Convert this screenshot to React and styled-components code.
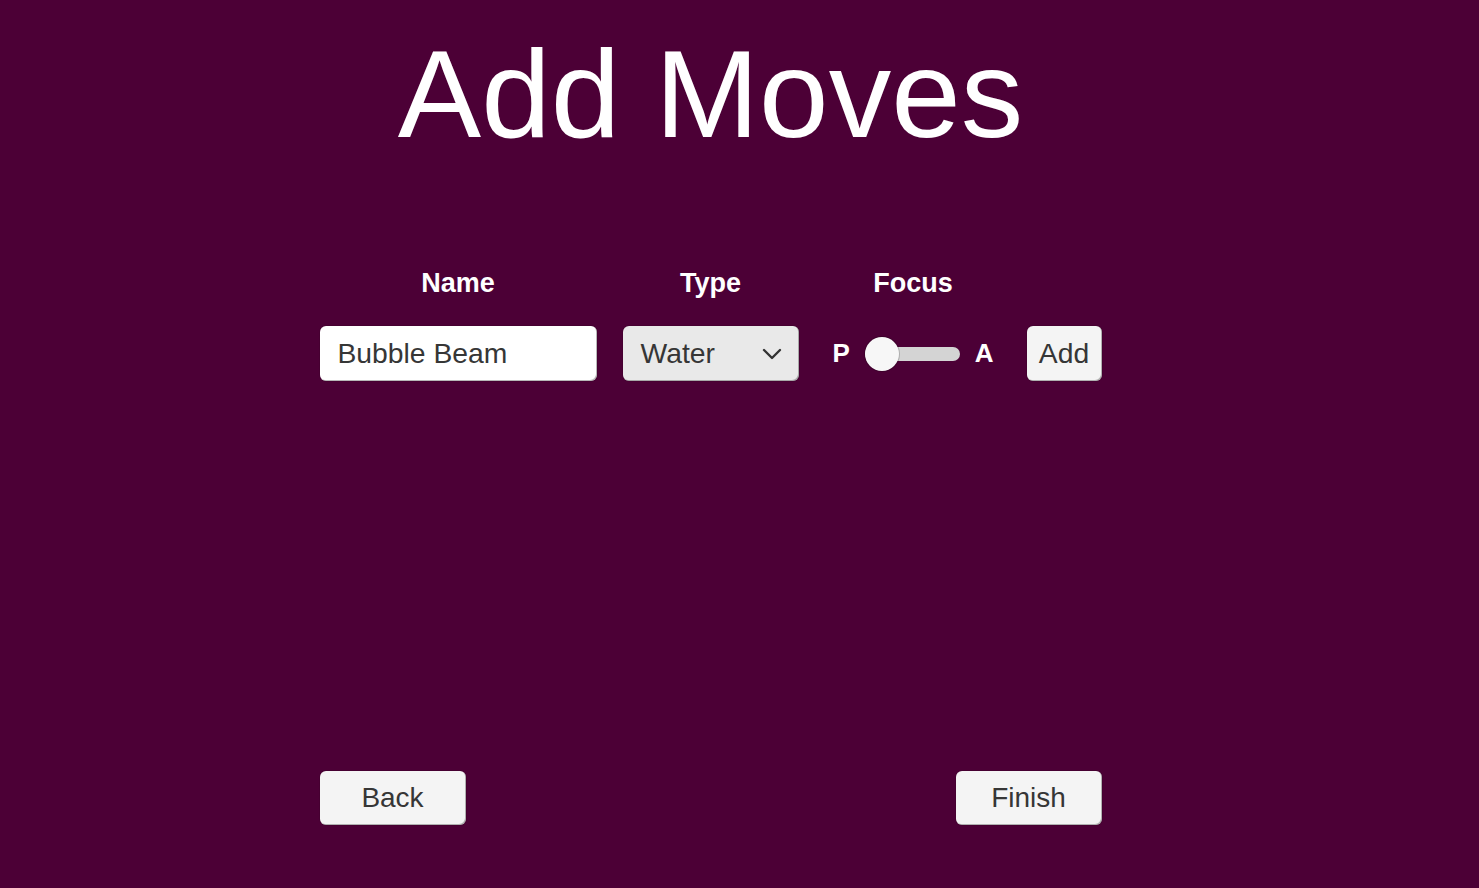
import React from "react";
import styled, { createGlobalStyle } from "styled-components";

const Global = createGlobalStyle`
  html, body { margin: 0; padding: 0; background: #4c0036; }
  body { font-family: "Liberation Sans", Arial, sans-serif; }
  * { box-sizing: border-box; }
`;

const Page = styled.div`
  min-height: 888px;
  background: #4c0036;
  display: flex;
  flex-direction: column;
  align-items: center;
  padding: 31px 58px 0 0;
`;

const Title = styled.h1`
  margin: 0;
  font-size: 125px;
  line-height: 125px;
  font-weight: 400;
  color: #ffffff;
  text-align: center;
`;

const Panel = styled.div`
  width: 782px;
  display: flex;
  flex-direction: column;
  margin-top: 111px;
`;

const Row = styled.div`
  display: flex;
  align-items: flex-end;
`;

const Field = styled.div`
  width: ${(p) => p.$width}px;
  margin-left: ${(p) => p.$ml || 0}px;
  display: flex;
  flex-direction: column;
  align-items: center;
  gap: 27px;
`;

const Label = styled.div`
  font-size: 27px;
  line-height: 32px;
  font-weight: 700;
  color: #ffffff;
  text-align: center;
`;

const Box = styled.div`
  width: 100%;
  height: 55px;
  border-radius: 6px;
  background: ${(p) => p.$bg || "#ffffff"};
  box-shadow: inset -1px -1px 0 rgba(0, 0, 0, 0.28), 0 0 0 1px rgba(0, 0, 0, 0.08);
  display: flex;
  align-items: center;
  justify-content: ${(p) => (p.$center ? "center" : "space-between")};
  padding: 0 ${(p) => (p.$center ? 0 : 17)}px 0 ${(p) => (p.$center ? 0 : 18)}px;
  font-size: 28.3px;
  color: #363636;
  white-space: nowrap;
`;

const SliderWrap = styled.div`
  width: 100%;
  height: 55px;
  display: flex;
  align-items: center;
  justify-content: space-between;
`;

const Letter = styled.span`
  font-size: 26px;
  font-weight: 700;
  color: #ffffff;
`;

const Track = styled.div`
  position: relative;
  width: 95px;
  height: 14px;
  border-radius: 7px;
  background: #d4d4d4;
`;

const Thumb = styled.div`
  position: absolute;
  left: 0;
  top: 50%;
  width: 34px;
  height: 34px;
  margin-top: -17px;
  border-radius: 50%;
  background: #f7f7f7;
  box-shadow: 0 0 0 1px rgba(0, 0, 0, 0.18);
`;

const Footer = styled.div`
  display: flex;
  justify-content: space-between;
  margin-top: 390px;
`;

const Button = styled.button`
  width: 146px;
  height: 54px;
  border: none;
  border-radius: 6px;
  background: #f4f4f4;
  box-shadow: inset -1px -1px 0 rgba(0, 0, 0, 0.28), 0 0 0 1px rgba(0, 0, 0, 0.08);
  font-family: "Liberation Sans", Arial, sans-serif;
  font-size: 28px;
  color: #363636;
  padding: 0;
`;

const Chevron = () => (
  <svg width="20" height="12" viewBox="0 0 20 12">
    <polyline points="2,2 10,10 18,2" fill="none" stroke="#333" strokeWidth="2.4" strokeLinecap="round" strokeLinejoin="round" />
  </svg>
);

export default function App() {
  return (
    <>
      <Global />
      <Page>
        <Title>Add Moves</Title>
        <Panel>
          <Row>
            <Field $width={277}>
              <Label>Name</Label>
              <Box>Bubble Beam</Box>
            </Field>
            <Field $width={176} $ml={26}>
              <Label>Type</Label>
              <Box $bg="#e9e9e9">
                <span>Water</span>
                <Chevron />
              </Box>
            </Field>
            <Field $width={161} $ml={34}>
              <Label>Focus</Label>
              <SliderWrap>
                <Letter>P</Letter>
                <Track>
                  <Thumb />
                </Track>
                <Letter>A</Letter>
              </SliderWrap>
            </Field>
            <Field $width={75} $ml={33}>
              <Box $bg="#f4f4f4" $center>Add</Box>
            </Field>
          </Row>
          <Footer>
            <Button>Back</Button>
            <Button>Finish</Button>
          </Footer>
        </Panel>
      </Page>
    </>
  );
}
